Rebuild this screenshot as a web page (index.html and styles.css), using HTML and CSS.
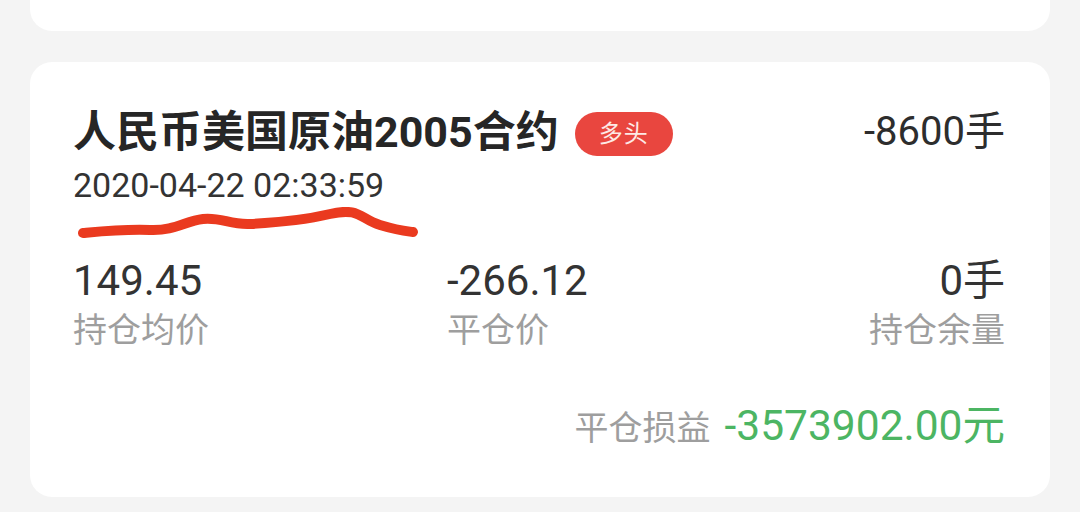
FILE: index.html
```html
<!DOCTYPE html>
<html lang="zh-CN">
<head>
<meta charset="utf-8">
<link rel="stylesheet" href="styles.css">
</head>
<body>
<div class="page">
  <div class="card card-top"></div>
  <div class="card card-main">
    <div class="head">
      <div class="head-left">
        <div class="title-row">
          <span class="title">人民币美国原油2005合约</span>
          <span class="badge">多头</span>
        </div>
        <div class="date">2020-04-22 02:33:59</div>
      </div>
      <div class="lots">-8600手</div>
      <svg class="scribble" width="360" height="40" viewBox="0 0 360 40">
        <path d="M8 26 C 30 24, 50 22, 75 23 S 110 14, 128 12 S 155 18, 175 17 S 225 14, 255 7 S 285 12, 305 18 S 330 24, 338 25" fill="none" stroke="#ea3a1f" stroke-width="10" stroke-linecap="round" stroke-linejoin="round"/>
      </svg>
    </div>
    <div class="stats">
      <div class="stat">
        <div class="val">149.45</div>
        <div class="lab">持仓均价</div>
      </div>
      <div class="stat">
        <div class="val">-266.12</div>
        <div class="lab">平仓价</div>
      </div>
      <div class="stat right">
        <div class="val">0手</div>
        <div class="lab">持仓余量</div>
      </div>
    </div>
    <div class="pnl">
      <span class="pnl-lab">平仓损益</span>
      <span class="pnl-val">-3573902.00元</span>
    </div>
  </div>
</div>
</body>
</html>
```
FILE: styles.css
```css
html, body {
  margin: 0;
  padding: 0;
  background: #f4f4f4;
  font-family: Roboto, "Noto Sans CJK SC", "Noto Sans", sans-serif;
  color: #2d2d2d;
}
.page {
  width: 1080px;
  height: 512px;
  overflow: hidden;
  padding: 0 30px;
  box-sizing: border-box;
  display: flex;
  flex-direction: column;
  gap: 31px;
}
.card {
  background: #fff;
  border-radius: 22px;
}
.card-top {
  height: 60px;
  margin-top: -29px;
  flex: none;
}
.card-main {
  flex: none;
  height: 435px;
  box-sizing: border-box;
  padding: 45px 45px 0 43px;
}
.head {
  position: relative;
  display: flex;
  justify-content: space-between;
  align-items: flex-start;
}
.title-row {
  display: flex;
  align-items: center;
  height: 50px;
}
.title {
  font-size: 43px;
  font-weight: 700;
  line-height: 50px;
  color: #262626;
}
.badge {
  margin-left: 16px;
  width: 98px;
  height: 44px;
  border-radius: 22px;
  background: #e9463f;
  color: #fde9e6;
  font-size: 24px;
  line-height: 44px;
  text-align: center;
  letter-spacing: 1px;
  margin-top: 4px;
}
.date {
  margin-top: 8px;
  font-size: 34px;
  line-height: 40px;
  color: #333;
}
.lots {
  font-size: 40px;
  line-height: 50px;
  color: #2d2d2d;
}
.scribble {
  position: absolute;
  left: 2px;
  top: 100px;
}
.stats {
  margin-top: 51px;
  display: grid;
  grid-template-columns: 374px 1fr auto;
}
.stat.right {
  text-align: right;
}
.val {
  font-size: 42px;
  line-height: 50px;
  color: #333;
}
.lab {
  margin-top: 2px;
  font-size: 34px;
  line-height: 44px;
  color: #9e9e9e;
}
.pnl {
  margin-top: 49px;
  display: flex;
  justify-content: flex-end;
  align-items: baseline;
  gap: 14px;
}
.pnl-lab {
  font-size: 34px;
  line-height: 50px;
  color: #9e9e9e;
}
.pnl-val {
  font-size: 42.5px;
  line-height: 50px;
  color: #4cb563;
}
```
